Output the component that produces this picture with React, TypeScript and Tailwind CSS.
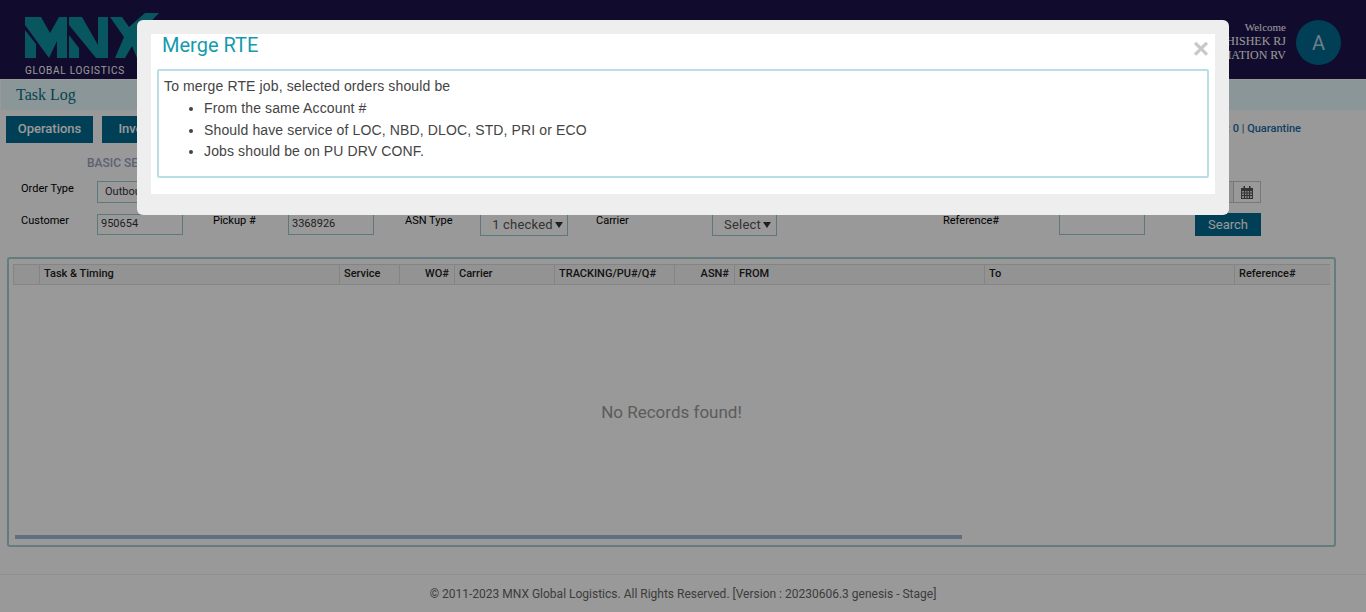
const columns = [
  { label: "", w: "w-[26px]" },
  { label: "Task & Timing", w: "w-[300px]" },
  { label: "Service", w: "w-[60px]" },
  { label: "WO#", w: "w-[55px]", right: true },
  { label: "Carrier", w: "w-[100px]" },
  { label: "TRACKING/PU#/Q#", w: "w-[120px]" },
  { label: "ASN#", w: "w-[60px]", right: true },
  { label: "FROM", w: "w-[250px]" },
  { label: "To", w: "w-[250px]" },
  { label: "Reference#", w: "w-[95px]" },
];

function Label({ text, className }: { text: string; className: string }) {
  return <span className={`text-[11px] leading-[13px] text-black ${className}`}>{text}</span>;
}

function TextField({ value, className }: { value?: string; className: string }) {
  return (
    <div className={`flex w-[86px] items-center border border-[#9cc9ce] text-[11px] text-[#333] ${className}`}>
      {value}
    </div>
  );
}

function DropButton({ text, className }: { text: string; className: string }) {
  return (
    <div className={`flex h-[23px] items-center justify-center gap-[2px] border border-[#9cc9ce] text-[13px] tracking-[0.2px] text-[#555] ${className}`}>
      {text}
      <span className="mt-px h-0 w-0 border-x-[4px] border-t-[6px] border-x-transparent border-t-[#333]" />
    </div>
  );
}

function MnxLogo() {
  return (
    <svg width="134" height="46" viewBox="0 0 134 46" className="block">
      <g fill="#0e8fa0">
        <polygon points="0,17 11,31 11,45 0,45" />
        <polygon points="0,4 16,4 25,20 34,4 42,4 42,45 32,45 32,28 24,45 0,12" />
        <polygon points="44,22 54,35 54,45 44,45" />
        <polygon points="44,4 57,4 73,32 73,4 83,4 83,45 71,45 44,12" />
        <polygon points="85,4 97,4 104,14 120,0 134,0 113,22 130,45 112,45 107,33 100,45 90,45 99,24" />
      </g>
    </svg>
  );
}

export default function App() {
  return (
    <div className="relative flex h-[612px] w-[1366px] flex-col overflow-hidden bg-white [font-family:Roboto,sans-serif]">
      <header className="flex h-[79px] shrink-0 items-start justify-between bg-[#1d134c]">
        <div className="ml-[25px] mt-[13px] flex flex-col">
          <MnxLogo />
          <span className="mt-[6px] text-[10px] leading-[11px] tracking-[0.75px] text-white">GLOBAL LOGISTICS</span>
        </div>
        <div className="mr-[25px] mt-[20px] flex items-start gap-[10px]">
          <div className="flex flex-col items-end text-[12px] leading-[14px] text-white [font-family:'Liberation_Serif',serif]">
            <span className="text-[11px]">Welcome</span>
            <span>ABHISHEK RJ</span>
            <span>AUTOMATION RV</span>
          </div>
          <div className="flex h-[45px] w-[45px] items-center justify-center rounded-full bg-[#006a90] text-[20px] text-[#b6d4e0]">A</div>
        </div>
      </header>

      <div className="mt-px ml-px flex h-[30px] shrink-0 items-center bg-[#e7fbfd] pl-[15px] text-[16px] text-[#0a6f86] [font-family:'Liberation_Serif',serif]">
        Task Log
      </div>

      <div className="mt-[6px] flex h-[27px] shrink-0 items-center pl-[6px] pr-[65px]">
        <div className="flex h-[27px] w-[87px] items-center justify-center bg-[#006a90] pb-px text-[13px] font-medium text-white">Operations</div>
        <div className="ml-[9px] flex h-[27px] w-[87px] items-center justify-center bg-[#006a90] pb-px text-[13px] font-medium text-white">Inventory</div>
        <div className="ml-auto text-[11px] font-medium text-[#1b6aa5]">
          Exception : 0 <span className="font-normal text-[#555]">|</span> Quarantine
        </div>
      </div>

      <div className="mt-[13px] h-[14px] shrink-0 pl-[87px] text-[12px] font-medium leading-[14px] text-[#9aa3c4]">BASIC SEARCH</div>

      <div className="mt-[11px] flex h-[22px] shrink-0 items-start pl-[21px]">
        <Label text="Order Type" className="w-[76px] pt-px" />
        <TextField value="Outbound" className="h-[22px] px-[7px]" />
        <div className="ml-auto h-[22px] w-[100px] border-y border-l border-[#ccc] bg-[#eeeeee]" />
        <div className="mr-[105px] flex h-[22px] w-[28px] items-center justify-center border border-[#c6c6c6]">
          <svg width="12" height="13" viewBox="0 0 12 13">
            <path d="M0 2h12v11H0z" fill="#555" />
            <path d="M1 5h2v1.500H1zM4 5h1.500v1.500H4zM6.500 5H8v1.500H6.500zM9 5h2v1.500H9zM1 7.500h2V9H1zM4 7.500h1.500V9H4zM6.500 7.500H8V9H6.500zM9 7.500h2V9H9zM1 10h2v2H1zM4 10h1.500v2H4zM6.500 10H8v2H6.500zM9 10h2v2H9z" fill="#ddd" />
            <path d="M2.500 0H4v3H2.500zM8 0h1.500v3H8z" fill="#555" />
          </svg>
        </div>
      </div>

      <div className="mt-[10px] flex h-[24px] shrink-0 items-start pl-[21px]">
        <Label text="Customer" className="w-[76px] pt-px" />
        <TextField value="950654" className="mt-px h-[21px] px-[3px]" />
        <Label text="Pickup #" className="ml-[30px] w-[75px] pt-px" />
        <TextField value="3368926" className="mt-px h-[21px] px-[3px]" />
        <Label text="ASN Type" className="ml-[31px] w-[75px] pt-px" />
        <DropButton text="1 checked" className="w-[88px] pl-[7px]" />
        <Label text="Carrier" className="ml-[28px] w-[116px] pt-px" />
        <DropButton text="Select" className="w-[65px] pl-[6px]" />
        <Label text="Reference#" className="ml-[166px] w-[116px] pt-px" />
        <TextField className="mt-px h-[21px]" />
        <div className="ml-[50px] flex h-[23px] w-[66px] items-center justify-center bg-[#006a90] text-[13px] text-white">Search</div>
      </div>

      <div className="ml-[7px] mt-[20px] flex h-[290px] w-[1329px] shrink-0 flex-col rounded-[3px] border-2 border-[#a5cfd3] pl-[4px] pr-[4px] pt-[5px]">
        <div className="flex h-[21px] shrink-0 border-y border-[#ddd] bg-[#f5f5f5]">
          {columns.map((col, i) => (
            <div
              key={i}
              className={`flex shrink-0 items-center border-l border-[#ddd] pl-[4px] text-[11px] font-medium text-[#222] ${col.w} ${col.right ? "justify-end pr-[5px]" : "pr-[4px]"}`}
            >
              {col.label}
            </div>
          ))}
        </div>
        <div className="flex flex-1 items-center justify-center pt-[6px] text-[17px] text-[#999]">No Records found!</div>
        <div className="mb-[6px] ml-[2px] h-[4px] w-[947px] bg-[#9fbad4]" />
      </div>

      <footer className="mt-[27px] flex flex-1 items-center justify-center border-t border-[#eee] text-[12px] text-[#666]">
        © 2011-2023 MNX Global Logistics. All Rights Reserved. [Version : 20230606.3 genesis - Stage]
      </footer>

      <div className="absolute inset-0 bg-black/40" />

      <div className="absolute left-[137px] top-[20px] h-[195px] w-[1092px] rounded-[6px] bg-[#eeeeee] p-[14px]">
        <div className="relative h-[160px] w-full bg-white px-[6px]">
          <h4 className="pl-[5px] text-[20px] leading-[22px] text-[#149aad]">Merge RTE</h4>
          <span className="absolute right-[6px] top-[5px] h-[20px] text-[28px] font-bold leading-[20px] text-[#c8c8c8] [font-family:'Liberation_Sans',sans-serif]">×</span>
          <div className="mt-[13px] h-[109px] rounded-[2px] border-2 border-[#b9dfe4] px-[5px] pt-[5px] text-[14px] leading-[20px] tracking-[0.13px] text-[#444] [font-family:'Liberation_Sans',sans-serif]">
            To merge RTE job, selected orders should be
            <ul className="list-disc pl-[40px]">
              <li className="mt-[2px] leading-[21.5px]">From the same Account #</li>
              <li className="leading-[21.5px]">Should have service of LOC, NBD, DLOC, STD, PRI or ECO</li>
              <li className="leading-[21.5px]">Jobs should be on PU DRV CONF.</li>
            </ul>
          </div>
        </div>
      </div>
    </div>
  );
}
